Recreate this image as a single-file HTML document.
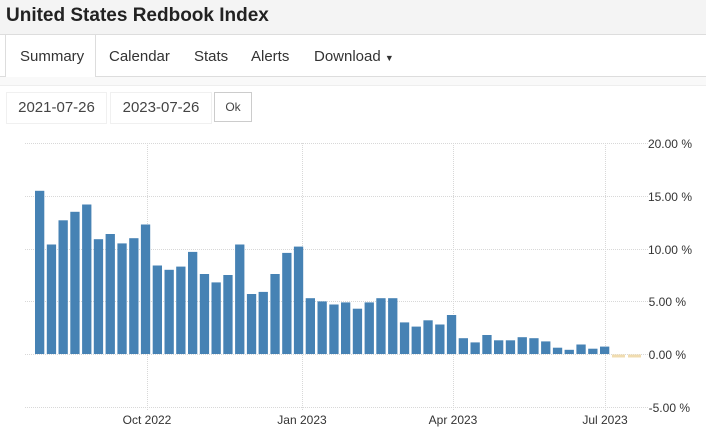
<!DOCTYPE html>
<html><head><style>
body{margin:0;width:706px;height:439px;background:#fff;font-family:"Liberation Sans",Arial,sans-serif;overflow:hidden;position:relative}
.t{position:absolute;left:0;top:0;width:706px;height:34px;background:#f4f4f4;border-bottom:1px solid #ddd}
.t h1{margin:0;position:absolute;left:6px;top:5px;font-size:19px;font-weight:bold;color:#222}
.tab{position:absolute;top:48px;font-size:15px;color:#333}
.bar{position:absolute;left:0;top:76px;width:706px;height:8px;background:#f9f9f9;border-top:1px solid #ddd;border-bottom:1px solid #eee}
.act{position:absolute;left:5px;top:35px;width:89px;height:42px;background:#fff;border-left:1px solid #ddd;border-right:1px solid #ddd}
.in{position:absolute;top:92px;height:30px;font-size:15px;color:#444;line-height:30px}
.ok{position:absolute;left:214px;top:92px;width:36px;height:28px;border:1px solid #ccc;font-size:12px;color:#444;text-align:center;line-height:28px}
</style></head><body>
<div class="t"><h1>United States Redbook Index</h1></div>
<div class="bar"></div>
<div class="act"></div>
<div class="tab" style="left:20px">Summary</div>
<div class="tab" style="left:109px">Calendar</div>
<div class="tab" style="left:194px">Stats</div>
<div class="tab" style="left:251px">Alerts</div>
<div class="tab" style="left:314px">Download <span style="font-size:9px">▼</span></div>
<div class="in" style="left:6px;width:99px;border:1px solid #f0f0f0;text-align:center">2021-07-26</div>
<div class="in" style="left:110px;width:100px;border:1px solid #f0f0f0;text-align:center">2023-07-26</div>
<div class="ok">Ok</div>
<svg style="position:absolute;left:0;top:0" width="706" height="439">
<g stroke="#d8d8d8" stroke-dasharray="1,1" stroke-width="1">
<line x1="25" y1="143.5" x2="648" y2="143.5"/><line x1="25" y1="196.5" x2="648" y2="196.5"/><line x1="25" y1="249.5" x2="648" y2="249.5"/><line x1="25" y1="301.5" x2="648" y2="301.5"/><line x1="25" y1="354.5" x2="648" y2="354.5"/><line x1="25" y1="407.5" x2="648" y2="407.5"/>
<line x1="147.5" y1="143" x2="147.5" y2="410"/><line x1="302.5" y1="143" x2="302.5" y2="410"/><line x1="453.5" y1="143" x2="453.5" y2="410"/><line x1="605.5" y1="143" x2="605.5" y2="410"/>
</g>
<g fill="#4682b4" id="b"></g>
<g stroke="#f0dcb0" stroke-width="3"><line x1="612" y1="356" x2="625" y2="356"/><line x1="628" y1="356" x2="641" y2="356"/></g>
<g font-size="12" fill="#333" text-anchor="end">
<text x="692" y="148">20.00 %</text><text x="692" y="201">15.00 %</text><text x="692" y="254">10.00 %</text><text x="686" y="306">5.00 %</text><text x="686" y="359">0.00 %</text><text x="690" y="412">-5.00 %</text>
</g>
<g font-size="12" fill="#333" text-anchor="middle">
<text x="147" y="424">Oct 2022</text><text x="302" y="424">Jan 2023</text><text x="453" y="424">Apr 2023</text><text x="605" y="424">Jul 2023</text>
</g>
</svg>
<script>
var v=[15.5,10.4,12.7,13.5,14.2,10.9,11.4,10.5,11.0,12.3,8.4,8.0,8.3,9.7,7.6,6.8,7.5,10.4,5.7,5.9,7.6,9.6,10.2,5.3,5.0,4.7,4.9,4.3,4.9,5.3,5.3,3.0,2.6,3.2,2.8,3.7,1.5,1.1,1.8,1.3,1.3,1.6,1.5,1.2,0.6,0.4,0.9,0.5,0.7];
var g=document.getElementById('b'),s='';
for(var i=0;i<v.length;i++){var h=v[i]*10.53;var x=35+i*11.77;s+='<rect x="'+x.toFixed(1)+'" y="'+(354-h).toFixed(1)+'" width="9.3" height="'+h.toFixed(1)+'"/>';}
g.innerHTML=s;
</script>
</body></html>
